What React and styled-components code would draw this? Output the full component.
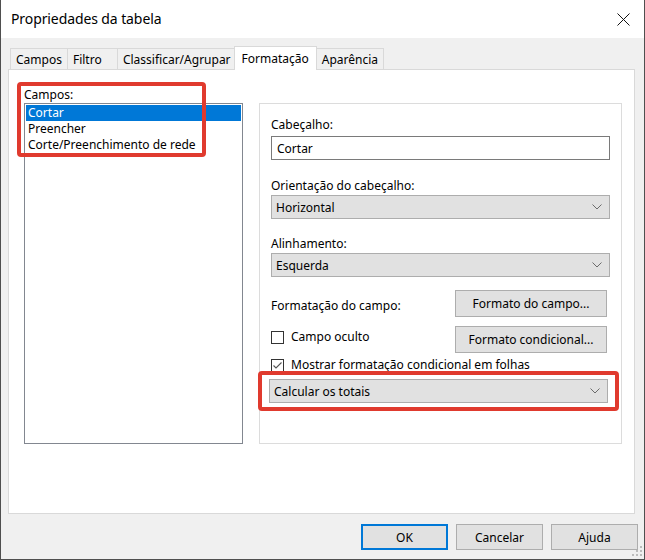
import styled, { createGlobalStyle } from "styled-components";

const GlobalStyle = createGlobalStyle`
  html, body {
    margin: 0;
    padding: 0;
    background: #ffffff;
  }
  body {
    font-family: "Noto Sans", "Open Sans", sans-serif;
    font-size: 12px;
    color: #000;
  }
  * { box-sizing: border-box; }
`;

const tabs = ["Campos", "Filtro", "Classificar/Agrupar", "Formatação", "Aparência"];
const fields = ["Cortar", "Preencher", "Corte/Preenchimento de rede"];

const Chevron = () => (
  <svg width="10" height="6" viewBox="0 0 10 6">
    <polyline points="0.5,0.5 5,5 9.5,0.5" fill="none" stroke="#6b6b6b" strokeWidth="1" />
  </svg>
);

const Select = ({ value }) => (
  <Dropdown>
    <span>{value}</span>
    <Chevron />
  </Dropdown>
);

const Check = ({ checked, label }) => (
  <CheckRow>
    <Box>
      {checked && (
        <svg width="11" height="11" viewBox="0 0 11 11">
          <polyline points="1.5,5.5 4,8 9.5,2.5" fill="none" stroke="#555" strokeWidth="1.1" />
        </svg>
      )}
    </Box>
    <span>{label}</span>
  </CheckRow>
);

export default function App() {
  return (
    <>
      <GlobalStyle />
      <Window>
        <TitleBar>
          <Title>Propriedades da tabela</Title>
          <svg width="13" height="13" viewBox="0 0 13 13">
            <path d="M0.5 0.5 L12.5 12.5 M12.5 0.5 L0.5 12.5" stroke="#111" strokeWidth="1" />
          </svg>
        </TitleBar>
        <Body>
          <TabStrip>
            {tabs.map((t) => (
              <Tab key={t} $active={t === "Formatação"}>{t}</Tab>
            ))}
          </TabStrip>
          <Panel>
            <LeftColumn>
              <Label>Campos:</Label>
              <ListBox>
                {fields.map((f, i) => (
                  <ListItem key={f} $selected={i === 0}>{f}</ListItem>
                ))}
              </ListBox>
              <Highlight $area="list" />
            </LeftColumn>
            <Group>
              <Label>Cabeçalho:</Label>
              <TextBox>Cortar</TextBox>
              <Label $gap={18}>Orientação do cabeçalho:</Label>
              <Select value="Horizontal" />
              <Label $gap={17}>Alinhamento:</Label>
              <Select value="Esquerda" />
              <ButtonRow $gap={13}>
                <RowLabel>Formatação do campo:</RowLabel>
                <Button>Formato do campo...</Button>
              </ButtonRow>
              <ButtonRow $gap={9} $top>
                <Check label="Campo oculto" />
                <Button>Formato condicional...</Button>
              </ButtonRow>
              <CheckLine>
                <Check checked label="Mostrar formatação condicional em folhas" />
              </CheckLine>
              <TotalsWrap>
                <Select value="Calcular os totais" />
                <Highlight $area="totals" />
              </TotalsWrap>
            </Group>
          </Panel>
          <Footer>
            <DialogButton $primary>OK</DialogButton>
            <DialogButton>Cancelar</DialogButton>
            <DialogButton>Ajuda</DialogButton>
          </Footer>
          <Grip width="11" height="11" viewBox="0 0 11 11">
            <rect x="8" y="0" width="2" height="2" fill="#bcbcbc" />
            <rect x="4" y="4" width="2" height="2" fill="#bcbcbc" />
            <rect x="8" y="4" width="2" height="2" fill="#bcbcbc" />
            <rect x="0" y="8" width="2" height="2" fill="#bcbcbc" />
            <rect x="4" y="8" width="2" height="2" fill="#bcbcbc" />
            <rect x="8" y="8" width="2" height="2" fill="#bcbcbc" />
          </Grip>
        </Body>
      </Window>
    </>
  );
}

const Window = styled.div`
  width: 645px;
  height: 560px;
  border: 1px solid #4f4f4f;
  border-top: none;
  display: flex;
  flex-direction: column;
`;

const TitleBar = styled.div`
  height: 38px;
  background: #fff;
  display: flex;
  align-items: center;
  justify-content: space-between;
  padding: 0 14px 0 10px;
`;

const Title = styled.div`
  font-size: 14px;
  letter-spacing: -0.1px;
  line-height: 20px;
`;

const Body = styled.div`
  flex: 1;
  background: #f0f0f0;
  display: flex;
  flex-direction: column;
  padding: 8px 9px 0 7px;
  position: relative;
`;

const TabStrip = styled.div`
  display: flex;
  align-items: flex-end;
  height: 23px;
  padding-left: 2px;
`;

const Tab = styled.div`
  height: ${(p) => (p.$active ? 24 : 21)}px;
  min-width: 51px;
  margin: ${(p) => (p.$active ? "0 -1px -1px -2px" : "0 -1px 0 0")};
  padding: 0 ${(p) => (p.$active ? 7 : 5)}px;
  border: 1px solid #d9d9d9;
  border-bottom: none;
  background: ${(p) => (p.$active ? "#fff" : "#f0f0f0")};
  position: relative;
  z-index: ${(p) => (p.$active ? 2 : 1)};
  display: flex;
  align-items: center;
  white-space: nowrap;
`;

const Panel = styled.div`
  height: 445px;
  background: #fff;
  border: 1px solid #d9d9d9;
  display: flex;
  gap: 16px;
  padding: 17px 12px 0 15px;
`;

const LeftColumn = styled.div`
  width: 219px;
  display: flex;
  flex-direction: column;
  position: relative;
`;

const Label = styled.div`
  line-height: 16px;
  margin-top: ${(p) => p.$gap || 0}px;
`;

const RowLabel = styled.span`
  padding-top: 4px;
`;

const ListBox = styled.div`
  height: 341px;
  border: 1px solid #828790;
  padding: 1px;
`;

const ListItem = styled.div`
  height: 16px;
  line-height: 16px;
  padding-left: 2px;
  background: ${(p) => (p.$selected ? "#0078d7" : "transparent")};
  color: ${(p) => (p.$selected ? "#fff" : "#000")};
  white-space: nowrap;
`;

const Highlight = styled.div`
  position: absolute;
  border: 4px solid #e03a2e;
  border-radius: 4px;
  pointer-events: none;
  ${(p) =>
    p.$area === "list"
      ? "left: -7px; top: -5px; width: 189px; height: 75px;"
      : "left: -11px; right: -11px; top: -8px; bottom: -8px;"}
`;

const Group = styled.div`
  flex: 1;
  margin-top: 16px;
  height: 341px;
  border: 1px solid #dcdcdc;
  padding: 13px 11px 0 11px;
  display: flex;
  flex-direction: column;
`;

const TextBox = styled.div`
  margin-top: 3px;
  height: 24px;
  border: 1px solid #7a7a7a;
  padding-left: 5px;
  display: flex;
  align-items: center;
`;

const Dropdown = styled.div`
  margin-top: 1px;
  height: 24px;
  background: #e1e1e1;
  border: 1px solid #adadad;
  padding: 0 7px 0 4px;
  display: flex;
  align-items: center;
  justify-content: space-between;
`;

const ButtonRow = styled.div`
  margin-top: ${(p) => p.$gap}px;
  display: flex;
  justify-content: space-between;
  align-items: ${(p) => (p.$top ? "flex-start" : "center")};
  padding-right: 3px;
`;

const Button = styled.div`
  width: 152px;
  height: 27px;
  background: #e1e1e1;
  border: 1px solid #adadad;
  display: flex;
  align-items: center;
  justify-content: center;
`;

const CheckRow = styled.div`
  display: flex;
  align-items: center;
  gap: 7px;
  line-height: 16px;
  margin-top: 3px;
`;

const Box = styled.div`
  width: 13px;
  height: 13px;
  border: 1px solid #333;
  background: #fff;
  display: flex;
  align-items: center;
  justify-content: center;
`;

const CheckLine = styled.div`
  margin-top: 4px;
  & > div { margin-top: 0; }
`;

const TotalsWrap = styled.div`
  position: relative;
  margin: 6px 2px 0 -2px;
  & > div:first-child { margin-top: 0; }
`;

const Footer = styled.div`
  display: flex;
  justify-content: flex-end;
  gap: 8px;
  padding: 10px 0 0 0;
  margin-right: -3px;
`;

const DialogButton = styled.div`
  width: 87px;
  height: 26px;
  background: #e1e1e1;
  border: ${(p) => (p.$primary ? "2px solid #0078d7" : "1px solid #adadad")};
  display: flex;
  align-items: center;
  justify-content: center;
`;

const Grip = styled.svg`
  position: absolute;
  right: 1px;
  bottom: 2px;
`;
